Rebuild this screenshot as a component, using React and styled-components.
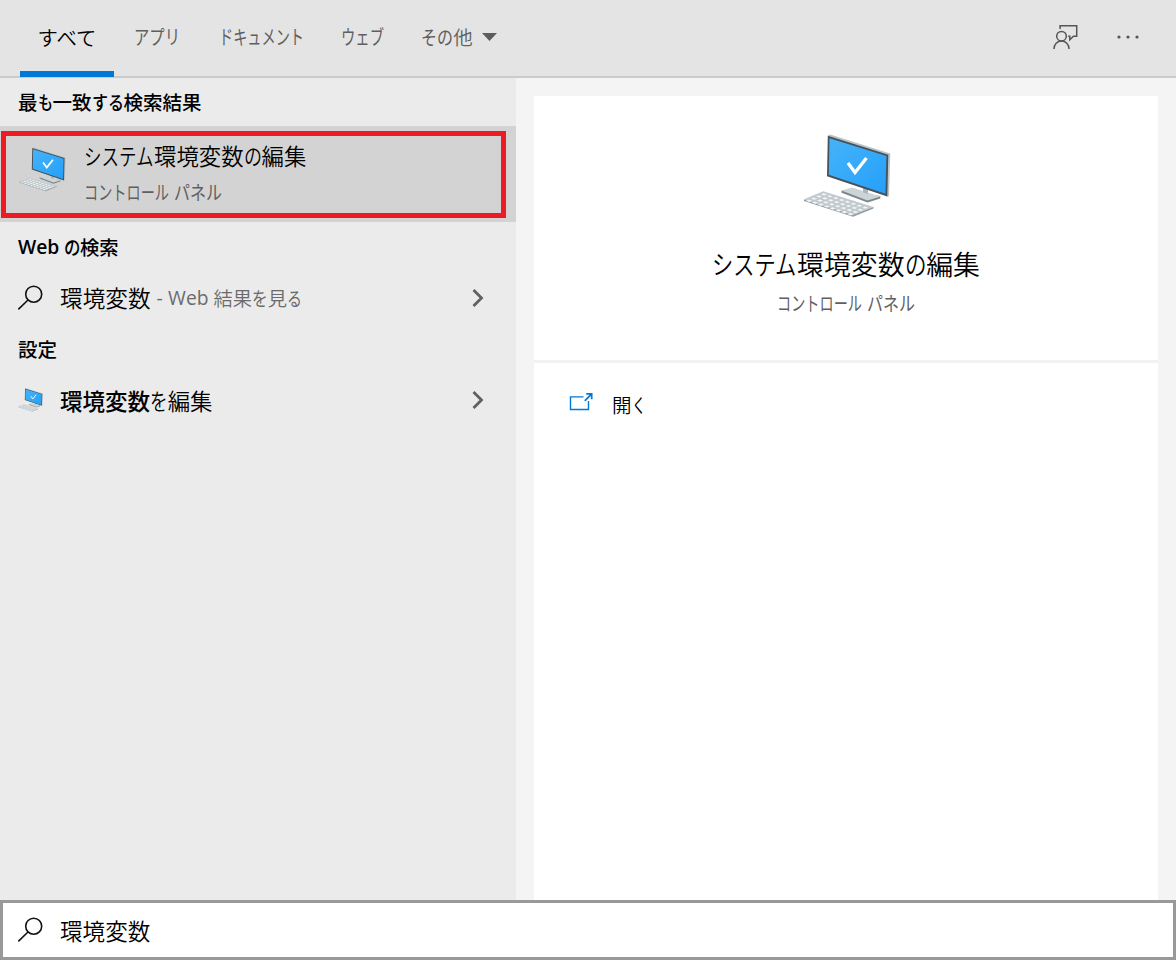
import React from "react";
import styled, { createGlobalStyle } from "styled-components";

const Global = createGlobalStyle`
  * { box-sizing: border-box; }
  body { margin: 0; font-family: "Open Sans", "Noto Sans CJK JP", sans-serif; color: #000; }
`;

const Window = styled.div`
  width: 1176px; height: 960px; display: flex; flex-direction: column;
  background: #f4f4f4; overflow: hidden;
`;

/* Japanese text set with narrow kana, as a UI typeface does */
const Line = styled.span`
  display: inline-flex; align-items: center; white-space: pre;
  font-family: "Noto Sans CJK JP", sans-serif;
  font-size: ${(p) => p.$size}px; line-height: 30px;
  font-weight: ${(p) => p.$weight || 350};
  color: ${(p) => p.$color || "#000"};
`;
const Run = styled.span`
  display: block; flex: none; width: ${(p) => p.$w}px;
  transform: scaleX(${(p) => p.$scale}); transform-origin: 0 50%;
  font-weight: ${(p) => p.$bold || "inherit"};
`;
const Latin = styled.span`
  flex: none; width: ${(p) => p.$w}px; font-weight: ${(p) => p.$bold || 400};
  font-family: "Open Sans", sans-serif; font-size: ${(p) => p.$size}px;
`;
function Label({ runs, size, $weight, ...rest }) {
  return (
    <Line $size={size} $weight={$weight} {...rest}>
      {runs.map(([text, w, kind, bold], i) => {
        if (kind === "latin")
          return <Latin key={i} $w={w} $size={size} $bold={bold}>{text}</Latin>;
        const scale = w / (text.length * size);
        // squeezed kana need a heavier cut to keep the stroke of the kanji beside them
        const kanaWeight = size > 21 ? 350 : 400;
        const weight = bold || (!$weight && scale < 0.9 ? kanaWeight : undefined);
        return <Run key={i} $w={w} $scale={scale} $bold={weight}>{text}</Run>;
      })}
    </Line>
  );
}

const Header = styled.header`
  height: 78px; flex: none; display: flex; background: #e4e4e4;
  border-bottom: 2px solid #cbcbcb; padding-left: 20px;
`;
const Tab = styled.button`
  border: 0; background: none; height: 77px; margin: 0 ${(p) => p.$gap}px 0 0;
  width: ${(p) => p.$w}px; display: flex; align-items: center; justify-content: center;
  border-bottom: 6px solid ${(p) => (p.$active ? "#0078d7" : "transparent")};
  padding: 4px 0 2px; gap: 9px;
`;
const Actions = styled.div`
  margin-left: auto; display: flex; gap: 37px; padding: 24px 36px 0 0;
`;

const Body = styled.div`flex: 1; min-height: 0; display: flex;`;
const Results = styled.section`
  width: 516px; flex: none; background: #ebebeb; display: flex; flex-direction: column;
`;
const Heading = styled.h2`
  margin: 0; padding-left: 18px; height: ${(p) => p.$h}px; display: flex; align-items: center;
`;
const BestMatch = styled.div`
  height: 96px; background: #d3d3d3; padding: 5px 10px 4px 1px;
`;
const Outline = styled.div`
  height: 87px; border: 5px solid #ed1c24; display: flex; padding: 0 0 0 13px; gap: 18px;
`;
const BestIcon = styled.div`padding-top: 11px;`;
const BestText = styled.div`
  display: flex; flex-direction: column; padding-top: 4px; gap: 7px;
`;
const Row = styled.div`
  height: 54px; display: flex; align-items: center; padding: 0 32px 0 18px;
`;
const RowIcon = styled.div`width: 42px; display: flex;`;
const RowText = styled.div`display: flex; align-items: center; padding-bottom: ${(p) => p.$lift || 1}px;`;
const Hint = styled.div`display: flex; padding: 2px 0 0 1px;`;
const Push = styled.div`margin-left: auto; display: flex;`;

const Preview = styled.section`flex: 1; padding: 18px 18px 0; display: flex;`;
const Card = styled.div`flex: 1; background: #fff;`;
const Hero = styled.div`
  height: 267px; border-bottom: 3px solid #f2f2f2; padding: 38px 0 0 1px;
  display: flex; flex-direction: column; align-items: center;
`;
const HeroTitle = styled.div`margin: 31px 1px 0 0; height: 39px; display: flex; align-items: flex-start;`;
const HeroSub = styled.div`display: flex; margin-right: 1px;`;
const OpenRow = styled.div`
  display: flex; align-items: center; gap: 18px; padding: 27px 0 0 35px;
`;
const OpenMark = styled.div`display: flex; padding-bottom: 7px;`;

const SearchBox = styled.div`
  height: 60px; flex: none; border: 3px solid #999; background: #fff;
  display: flex; align-items: center; padding-left: 15px;
`;

function Computer({ width }) {
  const keys = [];
  for (let r = 0; r < 4; r++)
    for (let c = 0; c < 8; c++) {
      const x = 20.5 + c * 5.9 - r * 4.9;
      const y = 59 + c * 1.9 + r * 2.15;
      keys.push(<path key={`${r}-${c}`} d={`M${x} ${y}l4 1.3-3.2 1.4-4-1.3z`} />);
    }
  return (
    <svg width={width} height={(width * 84) / 88} viewBox="0 0 88 84" style={{ display: "block" }}>
      <defs>
        <linearGradient id="screen" x1="0" y1="0" x2="1" y2="1">
          <stop offset="0" stopColor="#45b2f8" />
          <stop offset=".5" stopColor="#35aafa" />
          <stop offset="1" stopColor="#259ff9" />
        </linearGradient>
      </defs>
      <path d="M38.5 56.5v2.3l26 9.8 12.8-4V62z" fill="#7d888e" />
      <path d="M38.5 56.5L49 53.5 77.3 62.5 64.5 66.5z" fill="#ccd4d8" />
      <path d="M60 52l5 1.5v6.5l-5-1.6z" fill="#aeb7bc" />
      <path d="M24.8 1.2L27.3.6 87.3 19.6 86 62.2 84 62.8z" fill="#bcc4c8" />
      <path d="M24.8 1.8L85.3 20.7 84.3 62.5 24 42.3z" fill="#46525a" />
      <path d="M26.5 4.2L83.4 22 82.5 59.7 25.8 40.8z" fill="url(#screen)" />
      <path d="M45 29l7 9.5 11.5-14.5" fill="none" stroke="#fff" strokeWidth="3.3" />
      <path d="M1 65.3v1.8L50 82.8l20.5-8.4v-1.6L50 80.8z" fill="#8f9aa1" />
      <path d="M1 65.3L20.3 57.3 70.5 73 50 81z" fill="#c2cacf" />
      <g fill="#f4f6f7" stroke="#aeb7bc" strokeWidth=".3">{keys}</g>
    </svg>
  );
}

const SearchIcon = () => (
  <svg width="25" height="26" viewBox="0 0 25 26" fill="none" stroke="#111" strokeWidth="1.6">
    <circle cx="15.7" cy="9.2" r="8" />
    <path d="M10 15L.3 24.3" />
  </svg>
);
const Chevron = () => (
  <svg width="12" height="18" viewBox="0 0 12 18" fill="none" stroke="#606060" strokeWidth="2.8">
    <path d="M1.5 1l8 8-8 8" />
  </svg>
);
const FeedbackIcon = () => (
  <svg width="26" height="26" viewBox="0 0 26 26" fill="none" stroke="#555" strokeWidth="1.5">
    <path d="M7.1 5V1.8h16.6v10.4h-3.2l-3.7 3.6v-3.6h-1.7" />
    <circle cx="8.5" cy="12.2" r="4.8" />
    <path d="M1 25c0-4.8 3.3-8 7.5-8s7.5 3.2 7.5 8" />
  </svg>
);
const MoreIcon = () => (
  <svg width="24" height="26" viewBox="0 0 24 26" fill="#555">
    <circle cx="3" cy="13" r="1.6" /><circle cx="12" cy="13" r="1.6" /><circle cx="21" cy="13" r="1.6" />
  </svg>
);
const OpenIcon = () => (
  <svg width="25" height="20" viewBox="0 0 25 20" fill="none" stroke="#0078d7" strokeWidth="1.4">
    <path d="M14.5 4.9H1.5v12.6h18V9" />
    <path d="M15.8 8.8l6.6-6.6M17.3 1.9h5.4v5.4" strokeWidth="1.7" />
  </svg>
);
const Caret = () => (
  <svg width="15" height="8" viewBox="0 0 15 8"><path d="M0 0h15L7.5 8z" fill="#5c5c5c" /></svg>
);

const grey = "#5f5f5f";

export default function App() {
  return (
    <>
      <Global />
      <Window>
        <Header>
          <Tab $w={94} $gap={20} $active><Label size={20.4} runs={[["すべて", 61.2]]} /></Tab>
          <Tab $w={46} $gap={38}><Label size={20} $color={grey} runs={[["アプリ", 46]]} /></Tab>
          <Tab $w={86} $gap={37}><Label size={20} $color={grey} runs={[["ドキュメント", 85]]} /></Tab>
          <Tab $w={43} $gap={37}><Label size={20} $color={grey} runs={[["ウェブ", 43]]} /></Tab>
          <Tab $w={76} $gap={0}>
            <Label size={19.5} $color={grey} runs={[["その", 32], ["他", 19.5]]} />
            <Caret />
          </Tab>
          <Actions><FeedbackIcon /><MoreIcon /></Actions>
        </Header>
        <Body>
          <Results>
            <Heading $h={48}>
              <Label size={19.5} $weight={500}
                runs={[["最", 19.5], ["も", 15], ["一致", 39], ["する", 32], ["検索結果", 78]]} />
            </Heading>
            <BestMatch>
              <Outline>
                <BestIcon><Computer width={47} /></BestIcon>
                <BestText>
                  <Label size={22.4} runs={[["システム", 70], ["環境変数", 89.6], ["の", 18], ["編集", 44.8]]} />
                  <Label size={19.5} $color={grey} runs={[["コントロール", 85], [" ", 5, "latin"], ["パネル", 48]]} />
                </BestText>
              </Outline>
            </BestMatch>
            <Heading $h={49}>
              <Label size={19.3} $weight={500} runs={[["Web ", 45.5, "latin", 600], ["の", 16.5], ["検索", 38.6]]} />
            </Heading>
            <Row>
              <RowIcon><SearchIcon /></RowIcon>
              <RowText $lift={3}>
                <Label size={22.4} runs={[["環境変数", 90.6]]} />
                <Hint>
                  <Label size={19.3} $color="#6b6b6b"
                    runs={[[" ", 5, "latin"], ["- ", 11.5, "latin"], ["Web ", 45.5, "latin"], ["結果", 38.6], ["を", 15.5], ["見", 19.3], ["る", 15]]} />
                </Hint>
              </RowText>
              <Push><Chevron /></Push>
            </Row>
            <Heading $h={48}><Label size={19.5} $weight={500} runs={[["設定", 39]]} /></Heading>
            <Row>
              <RowIcon><Computer width={25} /></RowIcon>
              <RowText>
                <Label size={22.4} runs={[["環境変数", 90.2, "cjk", 500], ["を", 17.5], ["編集", 44.8]]} />
              </RowText>
              <Push><Chevron /></Push>
            </Row>
          </Results>
          <Preview>
            <Card>
              <Hero>
                <Computer width={88} />
                <HeroTitle>
                  <Label size={26.9} runs={[["システム", 85], ["環境変数", 107.6], ["の", 21.5], ["編集", 53.8]]} />
                </HeroTitle>
                <HeroSub>
                  <Label size={19.5} $color={grey} runs={[["コントロール", 85], [" ", 5, "latin"], ["パネル", 48]]} />
                </HeroSub>
              </Hero>
              <OpenRow>
                <OpenMark><OpenIcon /></OpenMark>
                <Label size={19.5} runs={[["開", 19.5], ["く", 14]]} />
              </OpenRow>
            </Card>
          </Preview>
        </Body>
        <SearchBox>
          <RowIcon><SearchIcon /></RowIcon>
          <Label size={22.4} runs={[["環境変数", 90.4]]} />
        </SearchBox>
      </Window>
    </>
  );
}
